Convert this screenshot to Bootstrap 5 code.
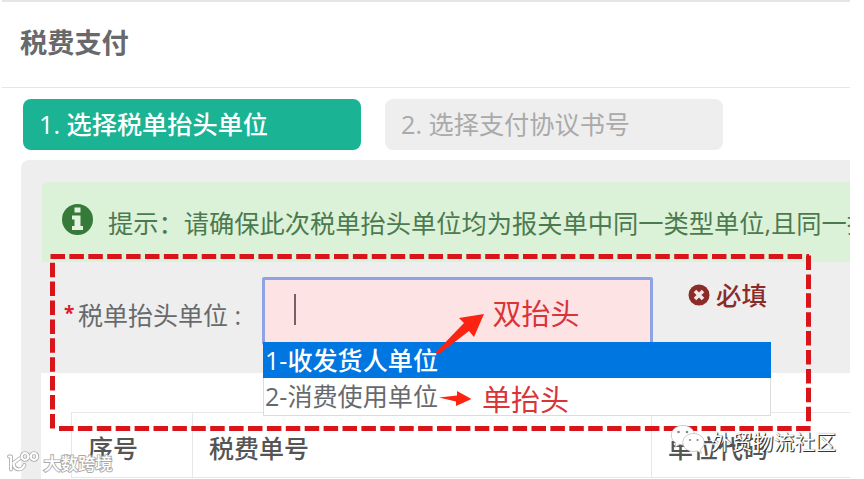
<!DOCTYPE html>
<html lang="zh-CN">
<head>
  <meta charset="UTF-8" />
  <meta name="viewport" content="width=device-width, initial-scale=1.0" />
  <title>税费支付</title>
  <link href="https://cdn.jsdelivr.net/npm/bootstrap@5.3.3/dist/css/bootstrap.min.css" rel="stylesheet" />
  <style>
    body {
      font-family: "Open Sans", "Noto Sans CJK SC", sans-serif;
      font-size: 25px;
      line-height: 36px;
      color: #676a6c;
      background: #fff;
    }
    .page {
      width: 848px;
      height: 479px;
      margin-left: 2px;
      border-top: 2px solid #e3e5e7;
    }
    .page-head {
      height: 86px;
      padding: 0 0 3px 18px;
      border-bottom: 1px solid #e4e5e6;
    }
    .page-head h1 {
      font-size: 27.2px;
      line-height: 36px;
      font-weight: 700;
      color: #67696b;
    }
    .steps {
      padding: 11px 0 10px 21px;
      gap: 24px;
    }
    .step {
      width: 338px;
      height: 51px;
      padding: 0 0 1px 16px;
      border-radius: 8px;
      background: #eee;
      color: #aaa;
      font-size: 25.2px;
    }
    .step.current {
      background: #1ab394;
      color: #fff;
      font-weight: 500;
    }
    .panel {
      height: 319px;
      margin-left: 19px;
      padding: 22px 0 0 21px;
      border-radius: 8px 0 0 0;
      background: #eee;
    }
    .tip {
      height: 80px;
      margin: 0;
      padding: 0 0 0 20px;
      border: 0;
      border-radius: 6px 0 0 0;
      background: #dcf2d8;
      color: #4c7a50;
      font-size: 25.25px;
    }
    .tip svg { margin: 0 15px 5px 0; }
    .tip span { padding-top: 2px; }
    .form-area { height: 111px; }
    .field-label {
      width: 220px;
      padding: 35px 0 0 22px;
    }
    .star {
      width: 14px;
      color: #e01b2c;
      font-size: 19px;
      font-weight: 700;
      line-height: 32px;
    }
    .field {
      width: 391px;
      height: 68px;
      margin-top: 15px;
      padding: 0;
      border: 3px solid #8fa3e4;
      border-radius: 2px;
      background: #fde3e3;
    }
    .caret {
      width: 2px;
      height: 31px;
      margin: 14px 0 0 29px;
      background: #7d5f63;
    }
    .options {
      top: 80px;
      left: 221px;
      width: 508px;
      height: 74px;
      z-index: 2;
      border: 1px solid #dcdcdc;
      border-top: 0;
      background: #fff;
      font-size: 25.1px;
    }
    .options .choice { height: 36px; line-height: 36px; padding-left: 1px; }
    .options .picked { background: #0076e0; color: #fff; margin: 0 -1px; padding-left: 2px; font-weight: 500; }
    .required {
      height: 36px;
      margin: 15px 0 0 35px;
      gap: 6px;
      color: #8b2c28;
      font-size: 25.4px;
      font-weight: 500;
    }
    .grid-area {
      height: 106px;
      margin-left: -1px;
      padding: 39px 0 0 30px;
      background: #fff;
    }
    .grid {
      height: 66px;
      border: 1px solid #e6e7e8;
      border-right: 0;
      color: #555;
      font-weight: 500;
    }
    .grid > div {
      padding: 17px 0 0 16px;
      border-right: 1px solid #e6e7e8;
    }
    .grid .c-no { width: 121px; }
    .grid .c-bill { width: 459px; }
    .grid .c-code { flex: 1; border-right: 0; }
    .overlay { z-index: 5; }
    .note { font-size: 29px; }
    .stamp-right {
      font-size: 20.8px;
      fill: #fff;
      text-shadow: 1px 1px 0 #333, 1px 0 1px #777;
    }
    .stamp-left {
      font-size: 17.3px;
      font-weight: 500;
      fill: #fff;
      stroke: #aaa;
      stroke-width: 1.8px;
      paint-order: stroke;
    }
  </style>
</head>
<body class="overflow-hidden">
  <main class="page overflow-hidden">
    <header class="page-head d-flex align-items-center">
      <h1 class="m-0">税费支付</h1>
    </header>

    <nav class="steps d-flex">
      <div class="step current d-flex align-items-center">1. 选择税单抬头单位</div>
      <div class="step d-flex align-items-center">2. 选择支付协议书号</div>
    </nav>

    <section class="panel">
      <div class="alert tip d-flex align-items-center text-nowrap overflow-hidden">
        <svg class="flex-shrink-0" width="31" height="31" viewBox="0 0 31 31">
          <circle cx="15.500" cy="15.500" r="15.500" fill="#357a38" />
          <path d="M12.500 3.500h6v5h-6zM10 11.500h8.500v10.500H21v4H10v-4h2.500v-6.500H10z" fill="#e4f3e0" />
        </svg>
        <span>提示：请确保此次税单抬头单位均为报关单中同一类型单位,且同一批</span>
      </div>

      <div class="form-area d-flex position-relative">
        <div class="field-label d-flex text-nowrap"><span class="star">*</span><span>税单抬头单位 :</span></div>
        <div class="field flex-shrink-0"><div class="caret"></div></div>
        <div class="required d-flex align-items-center text-nowrap">
          <svg width="22" height="22" viewBox="0 0 22 22">
            <circle cx="11" cy="11" r="10.500" fill="#8b2c28" />
            <path d="M7 7l8 8M15 7l-8 8" stroke="#f5e8e8" stroke-width="3.600" />
          </svg>
          <span>必填</span>
        </div>
        <div class="options position-absolute">
          <div class="choice picked">1-收发货人单位</div>
          <div class="choice">2-消费使用单位</div>
        </div>
      </div>

      <div class="grid-area">
        <div class="grid d-flex">
          <div class="c-no">序号</div>
          <div class="c-bill">税费单号</div>
          <div class="c-code">单位代码</div>
        </div>
      </div>
    </section>
  </main>

  <!-- red guide marks and stamps drawn over the form -->
  <svg class="overlay position-absolute top-0 start-0" width="864" height="479" viewBox="0 0 864 479">
    <g stroke="#d9151c" stroke-width="5" stroke-dasharray="14.500 4.400">
      <path d="M50.500 256.500H809" />
      <path d="M52.500 262.700V430" />
      <path d="M59 428.500H811" />
      <path d="M808.500 255.500V424" />
    </g>
    <g fill="#fb2413">
      <path d="M435 353L464 323L459 318L484 314L474 337L469 331L439 354Z" />
      <path d="M439 397.500L457 395.500V391L471.500 399L456 406V401.500Z" />
    </g>
    <g fill="#d93438">
      <text class="note" x="492.500" y="325">双抬头</text>
      <text class="note" x="482" y="411">单抬头</text>
    </g>

    <g fill="#fff" stroke="#aaa" stroke-width=".6">
      <path d="M683 425.500c6.500 0 11.500 4.200 11.500 9.700s-5 9.800-11.500 9.800l-3.500-.5-4.500 2.700.8-4.300c-3-1.800-4.500-4.600-4.500-7.700 0-5.500 5-9.700 11.700-9.700z" />
      <path d="M693.500 433.500c6 0 10.700 4 10.700 9 0 2.800-1.400 5.300-3.700 7l.8 3.700-4.100-2.200-3.700.5c-6 0-10.700-4-10.700-9s4.700-9 10.700-9z" />
    </g>
    <g fill="#888">
      <circle cx="678.500" cy="432" r="1.300" /><circle cx="687" cy="432" r="1.300" />
      <circle cx="690" cy="440" r="1.100" /><circle cx="697.500" cy="440" r="1.100" />
    </g>
    <text class="stamp-right" x="711" y="450">外贸物流社区</text>

    <g fill="none" stroke-linecap="round" stroke-linejoin="round">
      <g stroke="#aaa" stroke-width="3.800">
        <path d="M9 456.500H11V469.500M19.500 458.500L13.500 463C14 470.500 21.500 471.500 24.500 465" />
        <circle cx="25" cy="456.500" r="3.300" /><circle cx="34" cy="456.500" r="3.300" />
      </g>
      <g stroke="#fff" stroke-width="2.200">
        <path d="M9 456.500H11V469.500M19.500 458.500L13.500 463C14 470.500 21.500 471.500 24.500 465" />
        <circle cx="25" cy="456.500" r="3.300" /><circle cx="34" cy="456.500" r="3.300" />
      </g>
    </g>
    <text class="stamp-left" x="43.500" y="470">大数跨境</text>
  </svg>

  <script src="https://cdn.jsdelivr.net/npm/bootstrap@5.3.3/dist/js/bootstrap.bundle.min.js"></script>
</body>
</html>
